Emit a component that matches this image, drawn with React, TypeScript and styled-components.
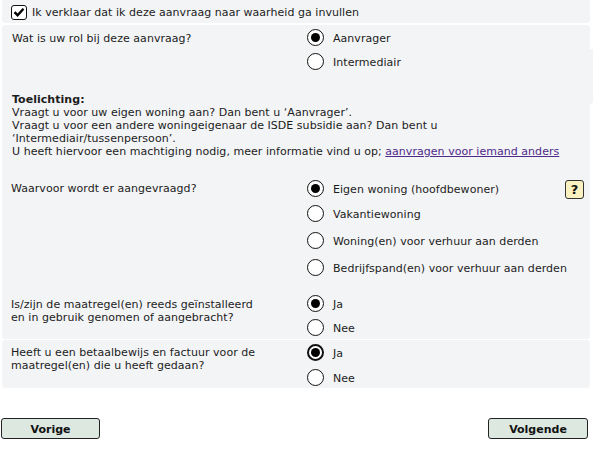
import React from "react";
import styled, { createGlobalStyle } from "styled-components";

const Global = createGlobalStyle`
  html, body { margin: 0; padding: 0; background: #fff; }
  body { font-family: "DejaVu Sans", Verdana, sans-serif; font-size: 11px; line-height: 13px; letter-spacing: 0.04px; color: #1c1c1c; }
`;
const Page = styled.div`
  width: 602px;
  height: 453px;
  overflow: hidden;
`;
const Column = styled.div`
  width: 588px;
  margin-left: 2px;
  display: flex;
  flex-direction: column;
`;
const Notice = styled.label`
  height: 23px;
  box-sizing: border-box;
  padding: 1px 0 0 9px;
  display: flex;
  align-items: center;
  gap: 5px;
  background: #f3f4f6;
  border-radius: 0 0 3px 3px;
  margin-bottom: 2px;
`;
const CheckBox = styled.span`
  width: 16px;
  height: 15px;
  box-sizing: border-box;
  border: 1.5px solid #111;
  border-radius: 3px;
  background: #fff;
  display: flex;
  align-items: center;
  justify-content: center;
`;
const Panel = styled.section`
  background: #f3f4f6;
  border-radius: 3px;
  display: flex;
  flex-direction: column;
`;
const MainPanel = styled(Panel)`
  height: 314px;
  margin-bottom: 1px;
`;
const LastPanel = styled(Panel)`
  height: 48px;
`;
const Row = styled.div<{ $top: number }>`
  display: flex;
  padding-top: ${p => p.$top}px;
`;
const Question = styled.div<{ $indent?: number; $pad?: number }>`
  width: 305px;
  flex: none;
  padding: ${p => p.$pad ?? 6}px 30px 0 ${p => p.$indent ?? 9}px;
  box-sizing: border-box;
`;
const Options = styled.div`
  display: flex;
  flex-direction: column;
  flex: 1;
  position: relative;
`;
const Option = styled.label<{ $h: number }>`
  height: ${p => p.$h}px;
  display: flex;
  align-items: center;
  gap: 9px;
`;
const OptionText = styled.span`
  padding-top: 2px;
`;
const Radio = styled.span<{ $on?: boolean; $heavy?: boolean }>`
  width: 17px;
  height: 17px;
  box-sizing: border-box;
  border-radius: 50%;
  border: ${p => (p.$heavy ? 2.5 : 1.5)}px solid #111;
  background: #fff;
  display: flex;
  align-items: center;
  justify-content: center;
  &::after {
    content: "";
    display: ${p => (p.$on ? "block" : "none")};
    width: 9px;
    height: 9px;
    border-radius: 50%;
    background: #000;
  }
`;
const Bump = styled.div`
  margin-right: -3px;
  height: 55px;
  background: #f3f4f6;
  border-radius: 0 0 3px 0;
`;
const Explain = styled.div`
  padding: 0 0 0 10px;
  margin-top: -11px;
`;
const Link = styled.a`
  color: #4f2a8a;
  text-decoration: underline;
`;
const Help = styled.button`
  position: absolute;
  left: 258px;
  top: 4px;
  width: 19px;
  height: 19px;
  padding: 0;
  background: #fbf0c0;
  border: 1px solid #333;
  border-radius: 3px;
  font: bold 13px "DejaVu Sans", sans-serif;
  color: #111;
`;
const Footer = styled.div`
  display: flex;
  justify-content: space-between;
  margin: 30px 0 0 -1px;
  width: 587px;
`;
const NavButton = styled.button<{ $w: number }>`
  width: ${p => p.$w}px;
  height: 21px;
  padding: 2px 0 0;
  background: #dde8e1;
  border: 1px solid #222;
  border-radius: 3px;
  font: bold 11px "DejaVu Sans", sans-serif;
  color: #111;
`;

const Opt = ({ label, on, h, heavy }: { label: string; on?: boolean; h: number; heavy?: boolean }) => (
  <Option $h={h}>
    <Radio $on={on} $heavy={heavy} />
    <OptionText>{label}</OptionText>
  </Option>
);

export default function App() {
  return (
    <Page>
      <Global />
      <Column>
        <Notice>
          <CheckBox>
            <svg width="12" height="12" viewBox="0 0 12 12">
              <path d="M1.5 6.2 4.6 9.2 10.5 2.8" fill="none" stroke="#000" strokeWidth="2.4" />
            </svg>
          </CheckBox>
          Ik verklaar dat ik deze aanvraag naar waarheid ga invullen
        </Notice>
        <MainPanel>
          <Row $top={0}>
            <Question $indent={10} $pad={7}>Wat is uw rol bij deze aanvraag?</Question>
            <Options>
              <Opt label="Aanvrager" on h={24} />
              <Bump>
                <Opt label="Intermediair" h={24} />
              </Bump>
            </Options>
          </Row>
          <Explain>
            <strong>Toelichting:</strong>
            <br />
            Vraagt u voor uw eigen woning aan? Dan bent u ‘Aanvrager’.
            <br />
            Vraagt u voor een andere woningeigenaar de ISDE subsidie aan? Dan bent u
            <br />
            ‘Intermediair/tussenpersoon’.
            <br />
            U heeft hiervoor een machtiging nodig, meer informatie vind u op;{" "}
            <Link href="#">aanvragen voor iemand anders</Link>
          </Explain>
          <Row $top={18}>
            <Question>Waarvoor wordt er aangevraagd?</Question>
            <Options>
              <Opt label="Eigen woning (hoofdbewoner)" on h={24} />
              <Opt label="Vakantiewoning" h={26} />
              <Opt label="Woning(en) voor verhuur aan derden" h={28} />
              <Opt label="Bedrijfspand(en) voor verhuur aan derden" h={26} />
              <Help>?</Help>
            </Options>
          </Row>
          <Row $top={11}>
            <Question $pad={7}>
              Is/zijn de maatregel(en) reeds geïnstalleerd
              <br />
              en in gebruik genomen of aangebracht?
            </Question>
            <Options>
              <Opt label="Ja" on h={25} />
              <Opt label="Nee" h={23} />
            </Options>
          </Row>
        </MainPanel>
        <LastPanel>
          <Row $top={0}>
            <Question>
              Heeft u een betaalbewijs en factuur voor de maatregel(en) die u heeft gedaan?
            </Question>
            <Options>
              <Opt label="Ja" on heavy h={24} />
              <Opt label="Nee" h={26} />
            </Options>
          </Row>
        </LastPanel>
        <Footer>
          <NavButton $w={99}>Vorige</NavButton>
          <NavButton $w={100}>Volgende</NavButton>
        </Footer>
      </Column>
    </Page>
  );
}
